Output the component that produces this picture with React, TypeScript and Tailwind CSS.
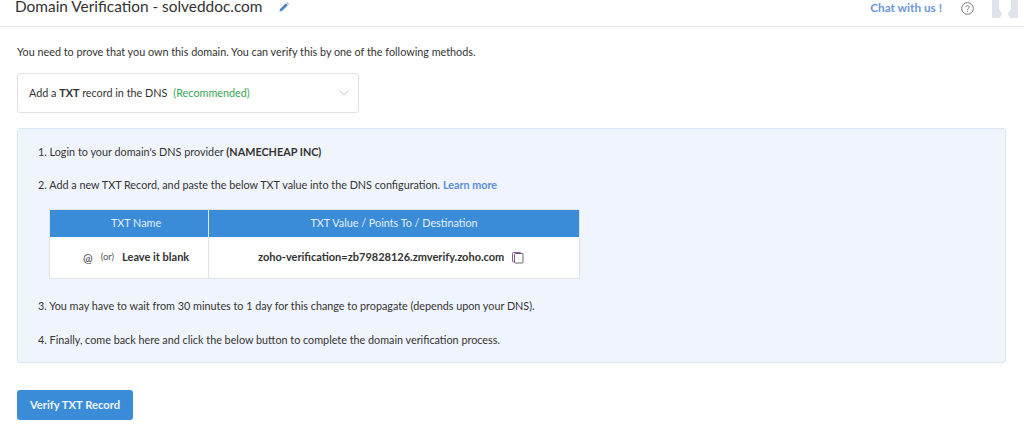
import { ChevronDown } from "lucide-react";

function Step({ children, className = "" }: { children: React.ReactNode; className?: string }) {
    return <p className={`ml-[20px] h-[17px] leading-[17px] ${className}`}>{children}</p>;
}

export default function App() {
    return (
        <div className="h-[433px] w-[1024px] overflow-hidden bg-white font-['Lato',sans-serif] text-[10.8px] text-[#333]">
            <header className="flex h-[27px] items-start border-b border-[#e5e5e5]">
                <h1 className="ml-[15px] mt-[-4px] text-[15.4px] leading-[20px] text-[#333]">Domain Verification - solveddoc.com</h1>
                <svg className="ml-[16px] mt-[2px]" width="10" height="10" viewBox="0 0 10 10">
                    <path d="M0.5 9.5 L1 7 L6.8 1.2 L8.8 3.2 L3 9 Z M7.5 0.6 L8.2 0.2 L9.8 1.8 L9.4 2.5 Z" fill="#4a86c8" />
                </svg>
                <div className="ml-auto flex items-start">
                    <span className="mt-[-1px] text-[11.8px] font-bold leading-[18px] text-[#6a97dc]">Chat with us !</span>
                    <svg className="ml-[19px] mt-[2px]" width="13" height="13" viewBox="0 0 13 13">
                        <circle cx="6.5" cy="6.5" r="5.8" fill="none" stroke="#777" strokeWidth="1" />
                        <path d="M4.8 5.2 C4.8 3.2 8.2 3.2 8.2 5.2 C8.2 6.4 6.5 6.3 6.5 7.8" fill="none" stroke="#777" strokeWidth="1" />
                        <circle cx="6.5" cy="9.6" r="0.7" fill="#777" />
                    </svg>
                    <svg className="ml-[18px] mr-[6px]" width="26" height="18" viewBox="0 0 26 18">
                        <rect width="26" height="18" fill="#dfe3ec" />
                        <path d="M7 0 H19 V7 C19 11 16 12 16 14 L18 18 H8 L10 14 C10 12 7 11 7 7 Z" fill="#fff" />
                    </svg>
                </div>
            </header>

            <main className="px-[17px]">
                <p className="mt-[16px] h-[17px] leading-[17px]">You need to prove that you own this domain. You can verify this by one of the following methods.</p>

                <div className="mt-[13px] flex h-[40px] w-[342px] items-center justify-between rounded-[3px] border border-[#e2e2e2] pl-[11px] pr-[6px]">
                    <span>
                        Add a <b>TXT</b> record in the DNS
                        <span className="ml-[6px] text-[#3aa655]">(Recommended)</span>
                    </span>
                    <ChevronDown className="text-[#c4c4c4]" size={16} strokeWidth={1.5} />
                </div>

                <section className="mt-[15px] h-[235px] w-[989px] rounded-[3px] border border-[#d6e6f5] bg-[#f0f5fd] pt-[14px]">
                    <Step className="tracking-[0.01px]">1. Login to your domain's DNS provider <b>(NAMECHEAP INC)</b></Step>
                    <Step className="mt-[16px]">
                        2. Add a new TXT Record, and paste the below TXT value into the DNS configuration.{" "}
                        <b className="text-[#5b8fd6]">Learn more</b>
                    </Step>

                    <div className="ml-[31px] mt-[16px] w-[531px] border border-[#dfe3e8] bg-white">
                        <div className="flex h-[27px] items-center bg-[#3a8bd8] text-[#e4f0fb]">
                            <div className="flex h-full w-[159px] items-center justify-center border-r border-[#e4e8ee] pl-[14px]">TXT Name</div>
                            <div className="flex-1 text-center">TXT Value / Points To / Destination</div>
                        </div>
                        <div className="flex h-[41px] items-center">
                            <div className="flex h-full w-[159px] items-center border-r border-[#dfe3e8] pl-[33px]">
                                <span className="text-[11.5px]">@</span>
                                <span className="ml-[8px] text-[9.5px] text-[#555]">(or)</span>
                                <b className="ml-[8px] text-[11px]">Leave it blank</b>
                            </div>
                            <div className="flex flex-1 items-center pl-[49px]">
                                <b className="text-[11px]">zoho-verification=zb79828126.zmverify.zoho.com</b>
                                <svg className="ml-[8px]" width="12" height="12" viewBox="0 0 12 12">
                                    <rect x="0.5" y="0.5" width="8.5" height="9.5" rx="1" fill="none" stroke="#8a5aa8" strokeWidth="1" />
                                    <rect x="2.5" y="1.5" width="8.5" height="9.5" rx="1" fill="#fff" stroke="#666" strokeWidth="1" />
                                </svg>
                            </div>
                        </div>
                    </div>

                    <Step className="mt-[18px]">3. You may have to wait from 30 minutes to 1 day for this change to propagate (depends upon your DNS).</Step>
                    <Step className="mt-[17px]">4. Finally, come back here and click the below button to complete the domain verification process.</Step>
                </section>

                <button className="mt-[27px] h-[30px] w-[116px] rounded-[3px] bg-[#3a8bd8] text-[11.2px] font-bold text-[#eef6fd]">Verify TXT Record</button>
            </main>
        </div>
    );
}
